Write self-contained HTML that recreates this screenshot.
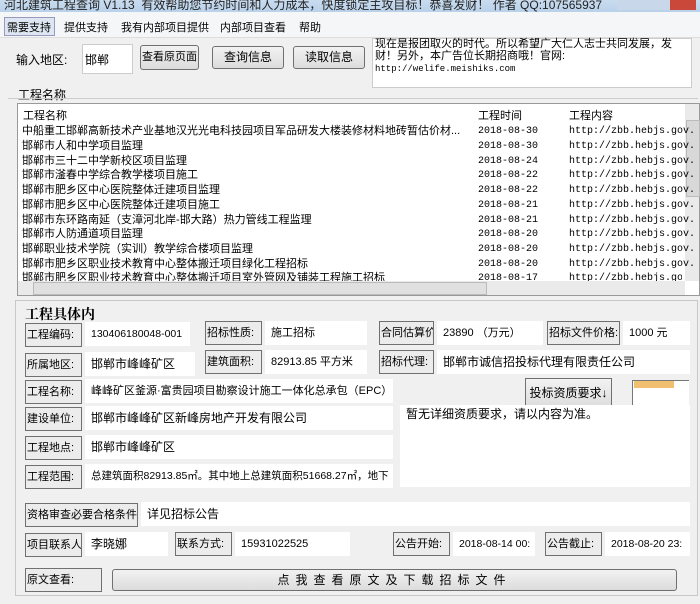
<!DOCTYPE html><html><head><meta charset="utf-8"><style>
body{margin:0;width:700px;height:604px;overflow:hidden;background:#f0f0f0;font-family:"Liberation Sans","Noto Sans CJK SC",sans-serif;font-size:12px;color:#000;position:relative}
.a{position:absolute;white-space:nowrap}
.lb{position:absolute;border:1px solid #707070;background:#ececec;box-sizing:border-box;padding:0 1px;line-height:22px;white-space:nowrap;font-size:11px;overflow:hidden}
.v{position:absolute;background:#fff;box-sizing:border-box;padding:0 6px;line-height:24px;white-space:nowrap;overflow:hidden;font-size:11px}
.btn{position:absolute;border:1px solid #707070;border-radius:3px;background:linear-gradient(#f2f2f2,#dcdcdc);box-sizing:border-box;text-align:center;white-space:nowrap}
.row{position:absolute;left:22px;width:660px;height:15px;line-height:15px;font-size:11px}
.row span{position:absolute;white-space:nowrap}
.m{font-family:"Liberation Mono","DejaVu Sans Mono",monospace;font-size:10px}
</style></head><body>
<div class="a" style="left:0;top:0;width:700px;height:12px;background:linear-gradient(#c9dcef,#b9d1ea);"></div>
<div class="a" style="left:4px;top:-4px;font-size:12px;color:#222">河北建筑工程查询 V1.13 &nbsp;有效帮助您节约时间和人力成本，快度锁定主攻目标！恭喜发财！ 作者 QQ:107565937</div>
<div class="a" style="left:617px;top:0;width:75px;height:10px;background:#c8d8ea"></div>
<div class="a" style="left:670px;top:0;width:26px;height:10px;background:#c9483a"></div>
<div class="a" style="left:0;top:12px;width:700px;height:25px;background:#f5f6f8;border-bottom:1px solid #ddd"></div>
<div class="a" style="left:4px;top:17px;width:49px;height:17px;border:1px solid #99b;background:#dde6f2"></div>
<div class="a" style="left:7px;top:19px;font-size:11px">需要支持</div>
<div class="a" style="left:64px;top:19px;font-size:11px">提供支持</div>
<div class="a" style="left:121px;top:19px;font-size:11px">我有内部项目提供</div>
<div class="a" style="left:220px;top:19px;font-size:11px">内部项目查看</div>
<div class="a" style="left:299px;top:19px;font-size:11px">帮助</div>
<div class="a" style="left:16px;top:51px">输入地区:</div>
<div class="a" style="left:82px;top:44px;width:49px;height:28px;background:#fff;border:1px solid #ccc"></div>
<div class="a" style="left:85px;top:51px">邯郸</div>
<div class="btn" style="left:140px;top:45px;width:59px;height:25px;line-height:23px;font-size:11px">查看原页面</div>
<div class="btn" style="left:212px;top:46px;width:72px;height:23px;line-height:21px;">查询信息</div>
<div class="btn" style="left:293px;top:46px;width:72px;height:23px;line-height:21px;">读取信息</div>
<div class="a" style="left:372px;top:38px;width:318px;height:48px;background:#fff;border:1px solid #ccc"></div>
<div class="a" style="left:375px;top:38px;font-size:11px;line-height:12px;white-space:normal;width:310px">现在是报团取火的时代。所以希望广大仁人志士共同发展，发财！另外，本广告位长期招商哦！官网:<br><span class="m" style="font-size:9px">http://welife.meishiks.com</span></div>
<div class="a" style="left:18px;top:86px">工程名称</div>
<div class="a" style="left:8px;top:98px;width:690px;height:1px;background:#ccc"></div>
<div class="a" style="left:17px;top:103px;width:683px;height:193px;background:#fff;border:1px solid #999;box-sizing:border-box"></div>
<div class="a" style="left:685px;top:104px;width:14px;height:177px;background:#eaeaea"></div>
<div class="a" style="left:686px;top:120px;width:12px;height:75px;background:#d8d8d8;border:1px solid #bbb"></div>
<div class="a" style="left:18px;top:281px;width:667px;height:14px;background:#eaeaea"></div>
<div class="a" style="left:33px;top:282px;width:452px;height:11px;background:#e0e0e0;border:1px solid #bbb"></div>
<div class="a" style="left:23px;top:107px;font-size:11px">工程名称</div>
<div class="a" style="left:478px;top:107px;font-size:11px">工程时间</div>
<div class="a" style="left:569px;top:107px;font-size:11px">工程内容</div>
<div class="row" style="top:124px"><span style="left:0">中船重工邯郸高新技术产业基地汉光光电科技园项目军品研发大楼装修材料地砖暂估价材...</span><span class="m" style="left:456px">2018-08-30</span><span class="m" style="left:547px">http://zbb.hebjs.gov.</span></div>
<div class="row" style="top:139px"><span>邯郸市人和中学项目监理</span><span class="m" style="left:456px">2018-08-30</span><span class="m" style="left:547px">http://zbb.hebjs.gov.</span></div>
<div class="row" style="top:154px"><span>邯郸市三十二中学新校区项目监理</span><span class="m" style="left:456px">2018-08-24</span><span class="m" style="left:547px">http://zbb.hebjs.gov.</span></div>
<div class="row" style="top:168px"><span>邯郸市滏春中学综合教学楼项目施工</span><span class="m" style="left:456px">2018-08-22</span><span class="m" style="left:547px">http://zbb.hebjs.gov.</span></div>
<div class="row" style="top:183px"><span>邯郸市肥乡区中心医院整体迁建项目监理</span><span class="m" style="left:456px">2018-08-22</span><span class="m" style="left:547px">http://zbb.hebjs.gov.</span></div>
<div class="row" style="top:198px"><span>邯郸市肥乡区中心医院整体迁建项目施工</span><span class="m" style="left:456px">2018-08-21</span><span class="m" style="left:547px">http://zbb.hebjs.gov.</span></div>
<div class="row" style="top:213px"><span>邯郸市东环路南延（支漳河北岸-邯大路）热力管线工程监理</span><span class="m" style="left:456px">2018-08-21</span><span class="m" style="left:547px">http://zbb.hebjs.gov.</span></div>
<div class="row" style="top:227px"><span>邯郸市人防通道项目监理</span><span class="m" style="left:456px">2018-08-20</span><span class="m" style="left:547px">http://zbb.hebjs.gov.</span></div>
<div class="row" style="top:242px"><span>邯郸职业技术学院（实训）教学综合楼项目监理</span><span class="m" style="left:456px">2018-08-20</span><span class="m" style="left:547px">http://zbb.hebjs.gov.</span></div>
<div class="row" style="top:257px"><span>邯郸市肥乡区职业技术教育中心整体搬迁项目绿化工程招标</span><span class="m" style="left:456px">2018-08-20</span><span class="m" style="left:547px">http://zbb.hebjs.gov.</span></div>
<div class="row" style="top:271px;height:10px;overflow:hidden"><span>邯郸市肥乡区职业技术教育中心整体搬迁项目室外管网及铺装工程施工招标</span><span class="m" style="left:456px">2018-08-17</span><span class="m" style="left:547px">http://zbb.hebjs.gov.</span></div>
<div class="a" style="left:15px;top:300px;width:683px;height:296px;border:1px solid #c8c8c8;box-sizing:border-box"></div>
<div class="a" style="left:25px;top:304px;font-weight:bold;font-size:14px;font-family:'Noto Serif CJK SC',serif">工程具体内</div>
<div class="lb" style="left:25px;top:323px;width:57px;height:24px">工程编码:</div><div class="v" style="left:85px;top:322px;width:105px;font-size:10.5px">130406180048-001</div>
<div class="lb" style="left:205px;top:321px;width:57px;height:24px">招标性质:</div><div class="v" style="left:265px;top:321px;width:102px">施工招标</div>
<div class="lb" style="left:379px;top:321px;width:55px;height:24px">合同估算价</div><div class="v" style="left:437px;top:321px;width:106px">23890 （万元）</div>
<div class="lb" style="left:547px;top:321px;width:73px;height:24px">招标文件价格:</div><div class="v" style="left:623px;top:321px;width:67px">1000 元</div>
<div class="lb" style="left:25px;top:353px;width:57px;height:24px">所属地区:</div><div class="v" style="left:85px;top:352px;width:110px;font-size:12px">邯郸市峰峰矿区</div>
<div class="lb" style="left:205px;top:350px;width:57px;height:24px">建筑面积:</div><div class="v" style="left:265px;top:350px;width:102px">82913.85 平方米</div>
<div class="lb" style="left:379px;top:350px;width:55px;height:24px">招标代理:</div><div class="v" style="left:437px;top:350px;width:253px;font-size:12px">邯郸市诚信招投标代理有限责任公司</div>
<div class="lb" style="left:25px;top:380px;width:57px;height:24px">工程名称:</div><div class="v" style="left:85px;top:379px;width:308px">峰峰矿区釜源·富贵园项目勘察设计施工一体化总承包（EPC）</div>
<div class="btn" style="left:525px;top:378px;width:87px;height:31px;line-height:29px;border-radius:0">投标资质要求↓</div>
<div class="a" style="left:632px;top:380px;width:56px;height:25px;border-left:1px solid #777;border-top:1px solid #777;background:#fff"></div>
<div class="a" style="left:634px;top:381px;width:40px;height:7px;background:#f0c070"></div>
<div class="lb" style="left:25px;top:407px;width:57px;height:24px">建设单位:</div><div class="v" style="left:85px;top:406px;width:308px;font-size:12px">邯郸市峰峰矿区新峰房地产开发有限公司</div>
<div class="v" style="left:400px;top:405px;width:290px;height:82px;line-height:18px;font-size:12px">暂无详细资质要求，请以内容为准。</div>
<div class="lb" style="left:25px;top:436px;width:57px;height:24px">工程地点:</div><div class="v" style="left:85px;top:435px;width:308px;font-size:12px">邯郸市峰峰矿区</div>
<div class="lb" style="left:25px;top:465px;width:57px;height:24px">工程范围:</div><div class="v" style="left:85px;top:464px;width:308px;font-size:10.5px">总建筑面积82913.85㎡。其中地上总建筑面积51668.27㎡，地下</div>
<div class="lb" style="left:25px;top:503px;width:113px;height:24px">资格审查必要合格条件:</div><div class="v" style="left:141px;top:502px;width:549px;font-size:12px">详见招标公告</div>
<div class="lb" style="left:25px;top:533px;width:57px;height:24px">项目联系人</div><div class="v" style="left:85px;top:532px;width:83px;font-size:12px">李晓娜</div>
<div class="lb" style="left:175px;top:532px;width:57px;height:24px">联系方式:</div><div class="v" style="left:235px;top:532px;width:115px">15931022525</div>
<div class="lb" style="left:393px;top:532px;width:57px;height:24px">公告开始:</div><div class="v" style="left:453px;top:532px;width:82px;font-size:10.5px">2018-08-14 00:</div>
<div class="lb" style="left:545px;top:532px;width:57px;height:24px">公告截止:</div><div class="v" style="left:605px;top:532px;width:85px;font-size:10.5px">2018-08-20 23:</div>
<div class="lb" style="left:25px;top:568px;width:77px;height:24px">原文查看:</div>
<div class="btn" style="left:112px;top:569px;width:565px;height:22px;line-height:20px;letter-spacing:6px">点我查看原文及下载招标文件</div>
</body></html>
